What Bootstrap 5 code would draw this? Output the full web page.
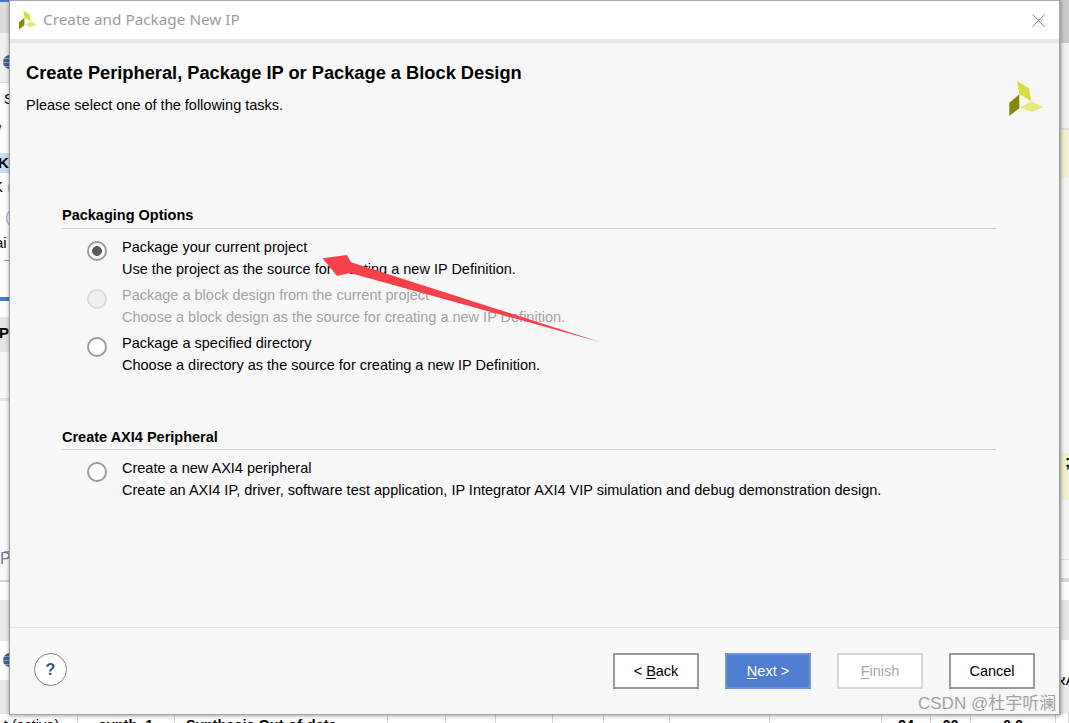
<!DOCTYPE html>
<html lang="en">
<head>
<meta charset="utf-8">
<title>Create and Package New IP</title>
<link href="https://cdn.jsdelivr.net/npm/bootstrap@5.3.0/dist/css/bootstrap.min.css" rel="stylesheet">
<style>
html,body{margin:0;height:723px;overflow:hidden;background:#fff;font-family:"Liberation Sans",Arial,sans-serif;font-size:14.5px;color:#000}
.desk{position:relative;width:1069px;height:723px;overflow:hidden;background:#f4f4f4}
/* backdrop application seen round the dialog */
.side{position:absolute;top:0;overflow:hidden;display:flex;flex-direction:column}
.side-l{left:0;width:9px;height:714px;background:#fff}
.side-r{left:1060px;width:9px;height:714px;background:#f4f4f4}
.band{flex:none;position:relative;overflow:hidden;font-size:15px;line-height:16px;white-space:nowrap}
.glyphs{position:absolute;left:-4px}
.globe{position:absolute;left:3px;width:14px;height:14px;border-radius:50%;background:repeating-linear-gradient(180deg,#3d5f9e 0 3px,#8fa5cc 3px 4px)}
.bottomrow{position:absolute;left:0;top:714px;width:1069px;height:9px;background:#fff;display:grid;grid-template-columns:78px 97px 213px 58px 50px 57px 51px 66px 100px 112px 49px 40px 85px 13px;overflow:hidden;font-size:14.5px;font-weight:700;line-height:16px}
.bottomrow>div{border-right:1px solid #d6d6d6;padding-top:3px;white-space:nowrap;overflow:hidden}
.synth{padding-left:11px}
/* dialog */
.dlg{position:absolute;left:9px;top:0;width:1052px;height:715px;border:1px solid #a6a6a6;border-left-color:#9a9a9a;border-right-width:2px;background:#f7f7f7;box-shadow:0 1px 4px rgba(0,0,0,.35);display:flex;flex-direction:column}
.dlg-title{height:38px;flex:none;background:#fff;color:#9b9b9b;font-family:"Noto Sans",sans-serif;font-size:15.3px;padding-left:8px;gap:5px}
.dlg-title-text{padding-bottom:2px}
.close-x{margin-right:14px}
.dlg-strip{height:4px;flex:none;background:#e6e6e6}
.dlg-body{flex:1 1 auto;position:relative;padding:19px 17px 0 16px;min-height:0}
.hdg{font-size:18.25px;font-weight:700;line-height:22px;margin:0}
.sub{line-height:20px;margin:11px 0 0}
.logo-big{position:absolute;left:998px;top:37px}
.opts{margin:0 46px 0 36px}
.sect-a{padding-top:90px}
.sect-b{padding-top:47px}
.sect-h{font-weight:700;line-height:20px;padding-bottom:3px;border-bottom:1px solid #cfcfcf;margin-bottom:7px}
.sect-b .sect-h{padding-bottom:2px}
.opt{display:flex;align-items:flex-start;margin-bottom:4px;line-height:22px;padding-left:25px}
.opt.off{color:#a3a3a3}
.opt input.form-check-input{flex:none;width:20px;height:20px;margin:5px 15px 0 0;border:2px solid #9c9c9c;border-radius:50%;background:#fff;background-image:none;opacity:1;box-shadow:none}
.opt input.form-check-input:checked{background:radial-gradient(circle,#5a5a5a 0 4.6px,#fff 5.2px);border-color:#9c9c9c}
.opt input.form-check-input:disabled{background:#eeeff0;border-color:#dadada}
.dlg-foot{flex:none;height:87px;border-top:1px solid #e3e3e3;padding:25px 24px 0 24px;display:flex;align-items:flex-start}
.helpbtn{width:33px;height:33px;padding:0;border-radius:50%;border:1px solid #808080;background:#fff;color:#34508f;font-weight:700;font-size:16px;line-height:30px;text-align:center}
.wizbtn{width:86px;height:36px;padding:0;border-radius:0;border:2px solid #999;background:#fff;color:#000;font-size:14.5px;line-height:32px;margin-left:26px}
.wizbtn u{text-underline-offset:2px}
.wizbtn-next{background:#507dcf;border-color:#6d95dc;color:#fff}
.wizbtn-off:disabled{background:#fff;border-color:#d6d6d6;color:#a8a8a8;opacity:1}
.arrow{position:absolute;left:0;top:0;pointer-events:none}
.mark-w{position:absolute;left:918px;top:693px;font-family:"Liberation Sans","Noto Sans CJK SC",sans-serif;font-size:17px;line-height:22px;color:#a2a2a2;white-space:nowrap}
</style>
</head>
<body>
<div class="desk">
  <svg width="0" height="0" class="position-absolute">
    <defs>
      <symbol id="xlogo" viewBox="1008 79 36 37">
        <polygon points="1017.3,80 1029,87.3 1031,100 1019.3,93.3" fill="#d8dc3a"/>
        <polygon points="1020,106.7 1031,100 1043.3,106 1031.7,111" fill="#e6ea7c"/>
        <polygon points="1009.3,101.7 1019.3,93.3 1019.3,107.3 1009.3,115" fill="#858a04"/>
      </symbol>
    </defs>
  </svg>

  <div class="side side-l">
    <div class="band" style="height:2px;background:#4a78c8"></div>
    <div class="band" style="height:31px;background:#dcdcdc"></div>
    <div class="band" style="height:49px;background:#f0f0f0"><span class="globe" style="top:22px"></span></div>
    <div class="band" style="height:71px;background:#fff;border-top:1px solid #ddd"><span class="glyphs" style="top:8px;left:4px">S</span><span class="glyphs" style="top:40px;left:-3px">/</span></div>
    <div class="band" style="height:20px;background:#c9dcf4"><span class="glyphs" style="top:2px;left:-2px;font-weight:700">K</span></div>
    <div class="band" style="height:32px;background:#fff"><span class="glyphs" style="top:6px;left:-7px">K</span><span class="glyphs" style="top:6px;left:7px;color:#9db4d4">(</span></div>
    <div class="band" style="height:30px;background:#fff"><span class="glyphs" style="top:4px;left:5px;color:#9db4d4">(</span></div>
    <div class="band" style="height:62px;background:#fff"><span class="glyphs" style="top:0;left:-5px">ai</span><span class="position-absolute" style="left:4px;top:25px;width:5px;height:1px;background:#999"></span></div>
    <div class="band" style="height:4px;background:#4a78c8"></div>
    <div class="band" style="height:16px;background:#fff"></div>
    <div class="band" style="height:35px;background:#e4e4e4"><span class="glyphs" style="top:8px;left:-1px;font-weight:700">P</span></div>
    <div class="band" style="height:46px;background:#f8f8f8"></div>
    <div class="band" style="height:3px;background:#e2e2e2"></div>
    <div class="band" style="height:151px;background:#fafafa"><span class="glyphs" style="top:150px;left:4px;width:5px;height:1px;background:#999"></span></div>
    <div class="band" style="height:28px;background:#fafafa"><span class="glyphs" style="top:-1px;left:0;color:#6b7f99;font-size:16px">P</span></div>
    <div class="band" style="height:20px;background:#fff;border-top:2px solid #d4d4d4"></div>
    <div class="band" style="height:41px;background:#e9e9e9"></div>
    <div class="band" style="height:39px;background:#fff"><span class="globe" style="top:12px"></span></div>
    <div class="band" style="height:34px;background:#e6e6e6"></div>
  </div>

  <div class="side side-r">
    <div class="band" style="height:43px;background:#c9c9c9"></div>
    <div class="band" style="height:85px;background:#f1f1f1"></div>
    <div class="band" style="height:2px;background:#dcdcdc"></div>
    <div class="band" style="height:48px;background:#f1f1cf"></div>
    <div class="band" style="height:275px;background:#f4f4f4"></div>
    <div class="band" style="height:47px;background:#f1f1cf"><span class="glyphs" style="top:1px;left:5px;font-weight:700;font-size:16px">;</span></div>
    <div class="band" style="height:60px;background:#f6f6f6;border-bottom:1px solid #ddd"></div>
    <div class="band" style="height:18px;background:#f8f8f8"></div>
    <div class="band" style="height:4px;background:#d6d6d6"></div>
    <div class="band" style="height:18px;background:#fff"></div>
    <div class="band" style="height:40px;background:#e6e6e6"></div>
    <div class="band" style="height:37px;background:#fff"></div>
    <div class="band" style="height:37px;background:#e9e9e9"><span class="glyphs" style="top:-5px;left:-5px">RA</span></div>
  </div>

  <div class="bottomrow">
    <div class="ps-1 fw-normal">t (active)</div><div class="text-center">synth_1</div><div class="synth">Synthesis Out-of-date</div>
    <div></div><div></div><div></div><div></div><div></div><div></div><div></div>
    <div class="text-center">24</div><div class="text-center">00</div><div class="text-center">0.0</div><div></div>
  </div>

  <div class="dlg">
    <div class="dlg-title d-flex align-items-center">
      <svg width="20" height="20"><use href="#xlogo"/></svg>
      <span class="flex-grow-1 dlg-title-text">Create and Package New IP</span>
      <svg class="close-x" width="13" height="13" viewBox="0 0 13 13"><path d="M.5.5l12 12M12.5.5l-12 12" stroke="#8a8a8a" stroke-width="1" fill="none"/></svg>
    </div>
    <div class="dlg-strip"></div>
    <div class="dlg-body">
      <h1 class="hdg">Create Peripheral, Package IP or Package a Block Design</h1>
      <p class="sub">Please select one of the following tasks.</p>
      <svg class="logo-big" width="36" height="37"><use href="#xlogo"/></svg>
      <div class="opts">
        <div class="sect-a">
          <div class="sect-h">Packaging Options</div>
          <label class="opt"><input class="form-check-input" type="radio" name="pk" checked><span>Package your current project<br>Use the project as the source for creating a new IP Definition.</span></label>
          <label class="opt off"><input class="form-check-input" type="radio" name="pk" disabled><span>Package a block design from the current project<br>Choose a block design as the source for creating a new IP Definition.</span></label>
          <label class="opt"><input class="form-check-input" type="radio" name="pk"><span>Package a specified directory<br>Choose a directory as the source for creating a new IP Definition.</span></label>
        </div>
        <div class="sect-b">
          <div class="sect-h">Create AXI4 Peripheral</div>
          <label class="opt"><input class="form-check-input" type="radio" name="pk"><span>Create a new AXI4 peripheral<br>Create an AXI4 IP, driver, software test application, IP Integrator AXI4 VIP simulation and debug demonstration design.</span></label>
        </div>
      </div>
    </div>
    <div class="dlg-foot">
      <button type="button" class="btn helpbtn">?</button>
      <div class="ms-auto d-flex">
        <button type="button" class="btn wizbtn">&lt; <u>B</u>ack</button>
        <button type="button" class="btn wizbtn wizbtn-next"><u>N</u>ext &gt;</button>
        <button type="button" class="btn wizbtn wizbtn-off" disabled><u>F</u>inish</button>
        <button type="button" class="btn wizbtn">Cancel</button>
      </div>
    </div>
  </div>

  <svg class="arrow" width="1069" height="723" viewBox="0 0 1069 723">
    <polygon points="322.5,258.3 347,255 351,262.3 600,342 350,273 337,276" fill="#f6404a"/>
  </svg>
  <div class="mark-w">CSDN @杜宇听澜</div>
</div>
<script src="https://cdn.jsdelivr.net/npm/bootstrap@5.3.0/dist/js/bootstrap.bundle.min.js"></script>
</body>
</html>
